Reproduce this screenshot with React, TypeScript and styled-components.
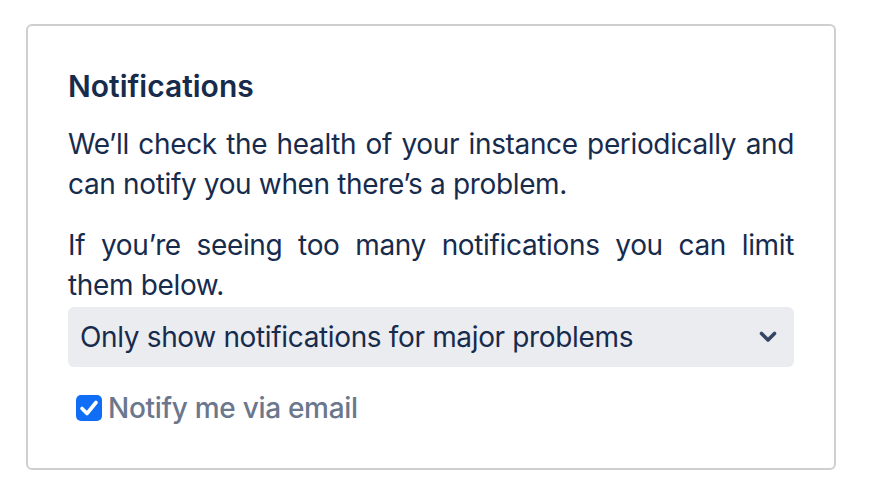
import React from "react"
import styled, { createGlobalStyle } from "styled-components"

const GlobalStyle = createGlobalStyle`
  body {
    margin: 0;
    background: #ffffff;
    font-family: Inter, "Noto Sans", sans-serif;
    color: #172b4d;
  }
`

const Page = styled.div`
  padding: 24px 0 0 26px;
`

const Card = styled.section`
  width: 726px;
  padding: 40px 40px 40px 40px;
  border: 2px solid #cfcfcf;
  border-radius: 6px;
`

const Title = styled.h4`
  margin: 0;
  font-size: 30px;
  line-height: 40px;
  font-weight: 600;
  color: #172b4d;
`

const Paragraph = styled.p<{ $gap: number }>`
  margin: ${(p) => p.$gap}px 0 0;
  font-size: 28px;
  line-height: 40px;
  letter-spacing: -0.35px;
  text-align: justify;
  color: #172b4d;
`

const SelectBox = styled.div`
  margin-top: 2px;
  height: 60px;
  display: flex;
  align-items: center;
  justify-content: space-between;
  padding: 0 17px 0 12px;
  background: #ebecf0;
  border-radius: 6px;
  font-size: 28px;
  letter-spacing: -0.35px;
  color: #172b4d;
  cursor: pointer;
`

const CheckRow = styled.label`
  margin-top: 21px;
  height: 40px;
  display: flex;
  align-items: center;
  gap: 6px;
  padding-left: 8px;
  font-size: 28px;
  line-height: 40px;
  font-weight: 500;
  letter-spacing: -0.3px;
  color: #6b778c;
`

const CheckBox = styled.span`
  width: 26px;
  height: 26px;
  border-radius: 5px;
  background: #0f6ef5;
  display: flex;
  align-items: center;
  justify-content: center;
  flex-shrink: 0;
`

const Chevron = () => (
  <svg width="18" height="12" viewBox="0 0 18 12">
    <polyline
      points="2.5,2.5 9,9 15.5,2.5"
      fill="none"
      stroke="#344563"
      strokeWidth="3.6"
      strokeLinecap="round"
      strokeLinejoin="round"
    />
  </svg>
)

const Check = () => (
  <svg width="20" height="18" viewBox="0 0 20 18">
    <polyline
      points="3,9.5 8,14.5 17,3.5"
      fill="none"
      stroke="#ffffff"
      strokeWidth="3.6"
      strokeLinecap="round"
      strokeLinejoin="round"
    />
  </svg>
)

export default function App() {
  return (
    <Page>
      <GlobalStyle />
      <Card>
        <Title>Notifications</Title>
        <Paragraph $gap={18}>
          We’ll check the health of your instance periodically and can notify you when there’s a problem.
        </Paragraph>
        <Paragraph $gap={21}>
          If you’re seeing too many notifications you can limit them below.
        </Paragraph>
        <SelectBox>
          <span>Only show notifications for major problems</span>
          <Chevron />
        </SelectBox>
        <CheckRow>
          <CheckBox>
            <Check />
          </CheckBox>
          Notify me via email
        </CheckRow>
      </Card>
    </Page>
  )
}
